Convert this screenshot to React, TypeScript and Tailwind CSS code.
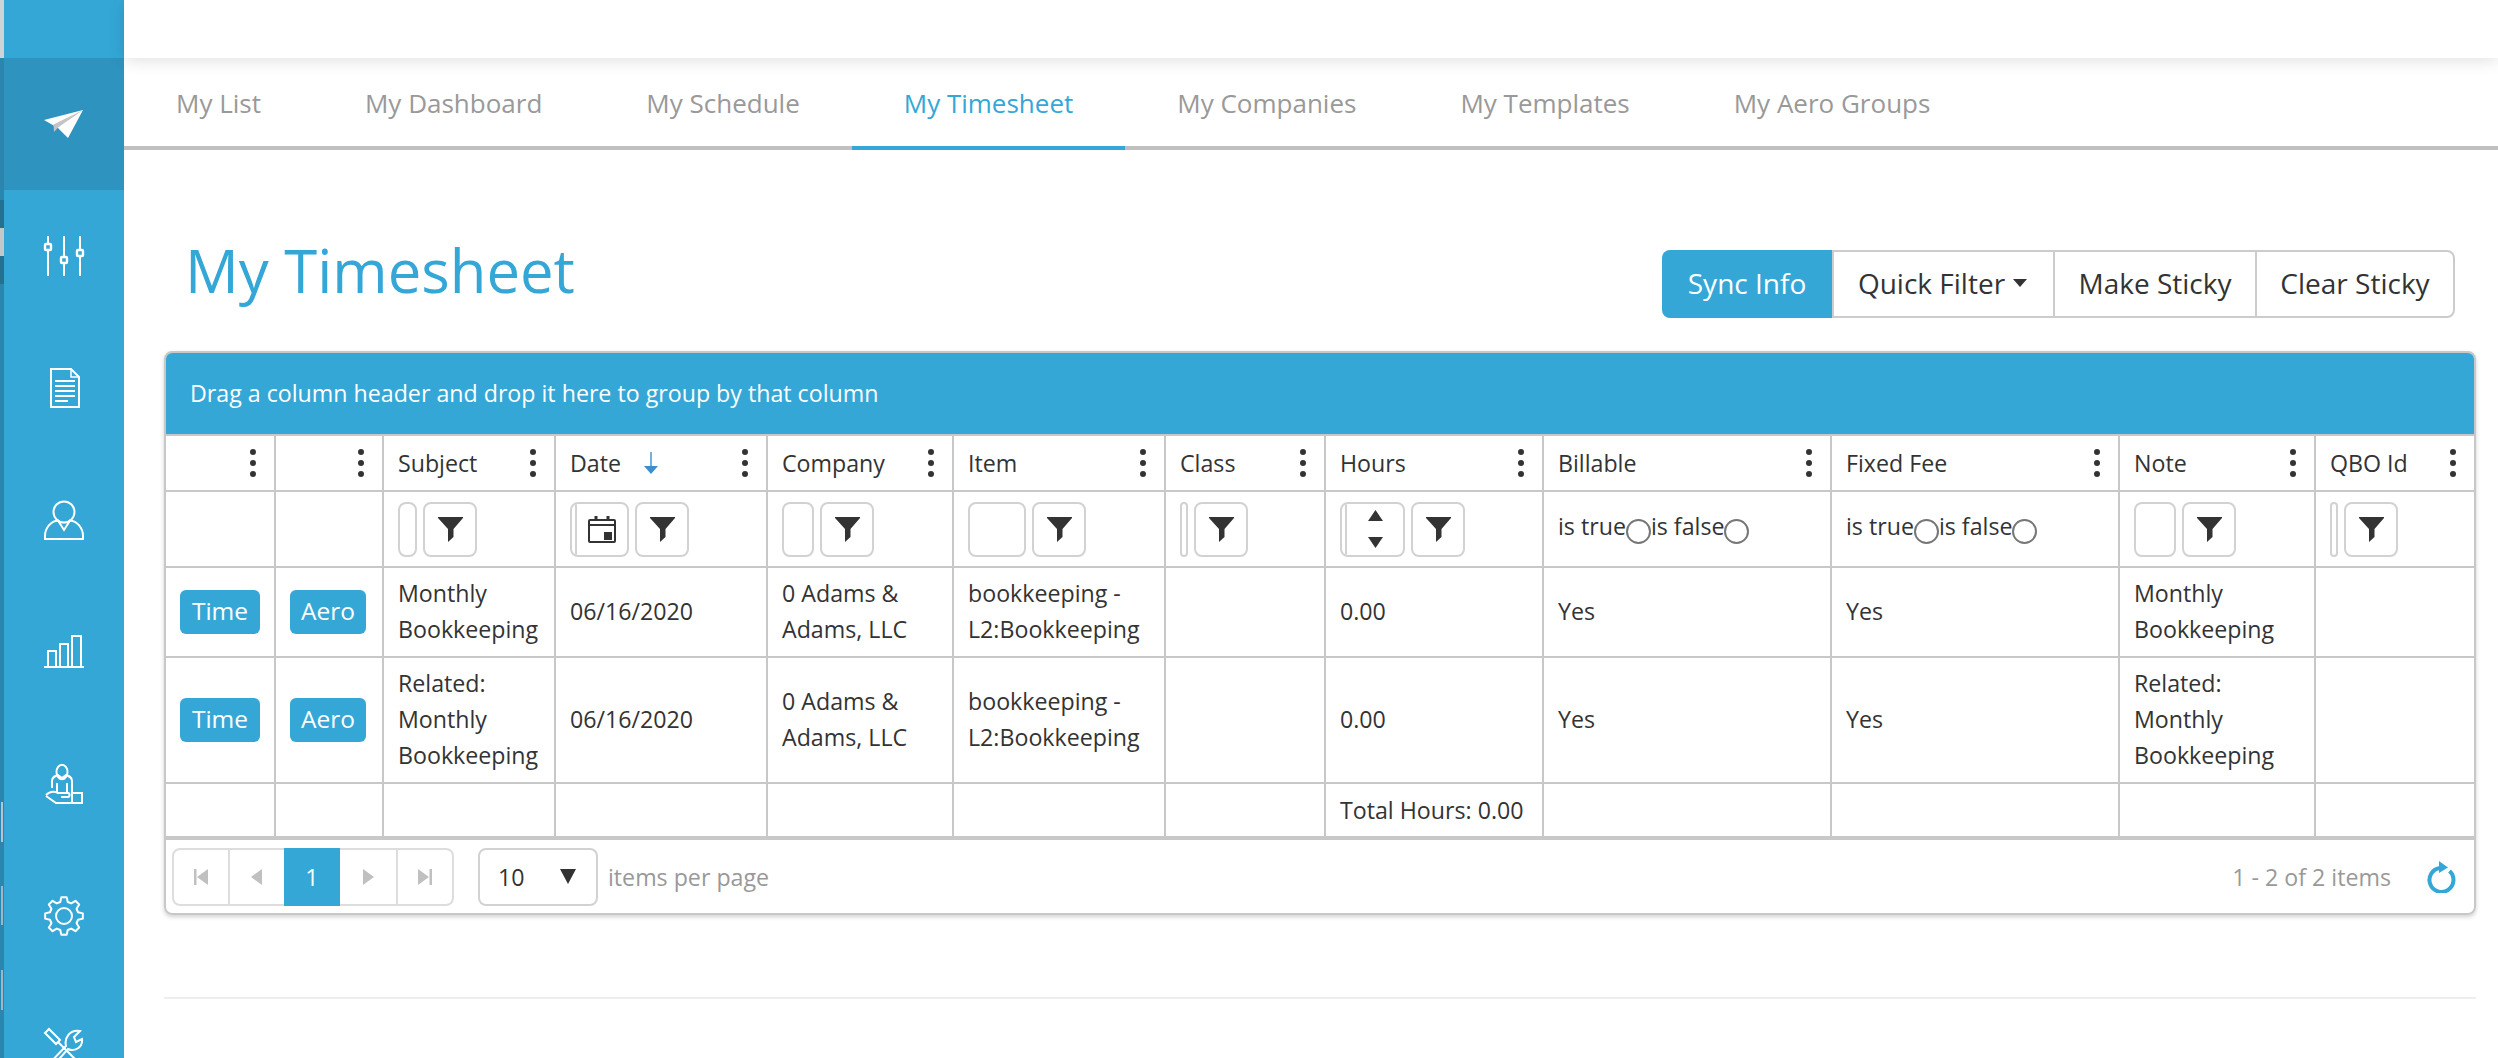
import type { ReactNode } from "react";

const strip: [string, string][] = [
  ["h-[58px]", "bg-[#cfd3d5]"],
  ["h-[142px]", "bg-[#2a86ae]"],
  ["h-[28px]", "bg-[#23708f]"],
  ["h-[28px]", "bg-[#c4c8ca]"],
  ["h-[28px]", "bg-[#23708f]"],
  ["h-[518px]", "bg-[#2a86ae]"],
  ["h-[40px] w-[2px] ml-[1px]", "bg-[#b8c4ca]"],
  ["h-[44px]", "bg-[#2a86ae]"],
  ["h-[39px] w-[2px] ml-[1px]", "bg-[#9fb6c2]"],
  ["h-[45px]", "bg-[#2a86ae]"],
  ["h-[40px] w-[2px] ml-[1px]", "bg-[#9fb6c2]"],
  ["h-[48px]", "bg-[#2a86ae]"],
];

function gearPath() {
  const pts: string[] = [];
  for (let i = 0; i < 8; i++) {
    const a = (i * Math.PI) / 4 - Math.PI / 2;
    const at = (r: number, d: number) => {
      const t = a + (d * Math.PI) / 180;
      return `${(20 + r * Math.cos(t)).toFixed(2)} ${(20 + r * Math.sin(t)).toFixed(2)}`;
    };
    pts.push(at(14.5, -15), at(19, -8), at(19, 8), at(14.5, 15));
  }
  return "M" + pts.join("L") + "Z";
}

function SideIcon({ children }: { children: ReactNode }) {
  return (
    <svg
      viewBox="0 0 40 40"
      className="w-10 h-10 overflow-visible"
      fill="none"
      stroke="#fff"
      strokeWidth="2"
    >
      {children}
    </svg>
  );
}

const sideIcons = [
  <SideIcon key="plane">
    <path d="M0 16L39 6L24 34L14 24Z" fill="#fff" stroke="none" />
    <path d="M39 6L9.5 20.5L10 28L14 23.5Z" fill="#c4c4c4" stroke="none" />
  </SideIcon>,
  <SideIcon key="sliders">
    <path d="M4 0V40M20 0V40M36 0V40" />
    <rect x="1" y="8" width="6" height="6" rx="1" fill="#34a7d7" strokeWidth="2.4" />
    <rect x="17" y="21" width="6" height="6" rx="1" fill="#34a7d7" strokeWidth="2.4" />
    <rect x="33" y="14" width="6" height="6" rx="1" fill="#34a7d7" strokeWidth="2.4" />
  </SideIcon>,
  <SideIcon key="doc">
    <path d="M7 1H27L35 9V39H7Z" />
    <path d="M27 1V9H35" strokeWidth="1.5" />
    <path d="M11 13H31M11 18H31M11 23H31M11 28H31M11 33H24" />
  </SideIcon>,
  <SideIcon key="user">
    <circle cx="20" cy="12" r="10.5" />
    <path d="M1 39V36C1 28 7 21 14 20.5L20 30L26 20.5C33 21 39 28 39 36V39Z" />
  </SideIcon>,
  <SideIcon key="chart">
    <path d="M4 35V19H12V35M16 35V12H24V35M28 35V4H37V35" />
    <path d="M0 35H40" />
  </SideIcon>,
  <SideIcon key="person">
    <ellipse cx="18" cy="8" rx="5.5" ry="7.2" />
    <path d="M8 24V17C8 13 11 12 14 11L18 14L22 11C25 12 28 13 28 17V29M13 19V28M23 19V28" />
    <path d="M2 31C6 27 10 27 14 29H24C26 29 26 33 24 33H17M2 32L12 39H38V29H28V39" />
  </SideIcon>,
  <SideIcon key="gear">
    <path d={gearPath()} strokeLinejoin="round" />
    <circle cx="20" cy="20" r="8" />
  </SideIcon>,
  <SideIcon key="tools">
    <path d="M1 5L5 1L16 12L12 16Z" />
    <path d="M14 14L38 38" />
    <path d="M3 38L22 18C20 10 26 1 36 3L30 9L32 14L38 11C39 20 30 24 24 21L7 40" />
  </SideIcon>,
];

function Dots() {
  return (
    <svg viewBox="0 0 6 28" className="w-[6px] h-7 shrink-0" fill="#333">
      <circle cx="3" cy="3" r="3" />
      <circle cx="3" cy="14" r="3" />
      <circle cx="3" cy="25" r="3" />
    </svg>
  );
}

function Funnel() {
  return (
    <svg viewBox="0 0 25 25" className="w-[25px] h-[25px]" fill="#333">
      <path d="M0 0H25V1L15.5 12V20L10 25V12L0 1Z" />
    </svg>
  );
}

function Calendar() {
  return (
    <svg viewBox="0 0 28 28" className="w-7 h-7" fill="none" stroke="#333" strokeWidth="2">
      <path d="M2 5H26Q27 5 27 6V26Q27 27 26 27H2Q1 27 1 26V6Q1 5 2 5Z" />
      <path d="M1 10H27" />
      <path d="M8 1V6M20 1V6" strokeWidth="3" />
      <rect x="16" y="17" width="8" height="8" fill="#333" stroke="none" />
    </svg>
  );
}

function Spinner() {
  return (
    <div className="flex flex-col items-center gap-[16px]">
      <svg viewBox="0 0 15 11" className="w-[15px] h-[11px]" fill="#333">
        <path d="M7.5 0L15 11H0Z" />
      </svg>
      <svg viewBox="0 0 15 11" className="w-[15px] h-[11px]" fill="#333">
        <path d="M0 0H15L7.5 11Z" />
      </svg>
    </div>
  );
}

function FilterCell({ input, inner }: { input: string; inner?: ReactNode }) {
  return (
    <div className="flex items-center gap-[6px]">
      <div className={`${input} h-[55px] rounded-lg border-2 border-[#d2d2d2] bg-white flex overflow-hidden`}>
        {inner && (
          <div className="ml-[3px] flex-1 border-l-2 border-[#d2d2d2] flex items-center justify-center">
            {inner}
          </div>
        )}
      </div>
      <button className="w-[54px] h-[55px] rounded-lg border-2 border-[#d2d2d2] bg-white flex items-center justify-center">
        <Funnel />
      </button>
    </div>
  );
}

function Radio() {
  return (
    <span className="inline-block w-[25px] h-[25px] rounded-full border-2 border-[#777] bg-white align-[-9px]" />
  );
}

function BoolFilter() {
  return (
    <div className="-mt-[6px]">
      is true
      <Radio />
      is false
      <Radio />
    </div>
  );
}

type Col = {
  title: string;
  width: string;
  filter?: ReactNode;
  sorted?: boolean;
};

const cols: Col[] = [
  { title: "", width: "w-[110px]" },
  { title: "", width: "w-[108px]" },
  { title: "Subject", width: "w-[172px]", filter: <FilterCell input="w-[19px]" /> },
  { title: "Date", width: "w-[212px]", sorted: true, filter: <FilterCell input="w-[59px]" inner={<Calendar />} /> },
  { title: "Company", width: "w-[186px]", filter: <FilterCell input="w-[32px]" /> },
  { title: "Item", width: "w-[212px]", filter: <FilterCell input="w-[58px]" /> },
  { title: "Class", width: "w-[160px]", filter: <FilterCell input="w-[8px]" /> },
  { title: "Hours", width: "w-[218px]", filter: <FilterCell input="w-[65px]" inner={<Spinner />} /> },
  { title: "Billable", width: "w-[288px]", filter: <BoolFilter /> },
  { title: "Fixed Fee", width: "w-[288px]", filter: <BoolFilter /> },
  { title: "Note", width: "w-[196px]", filter: <FilterCell input="w-[42px]" /> },
  { title: "QBO Id", width: "w-[158px]", filter: <FilterCell input="w-[8px]" /> },
];

const rows = [
  { h: "h-[90px]", subject: ["Monthly", "Bookkeeping"] },
  { h: "h-[126px]", subject: ["Related:", "Monthly", "Bookkeeping"] },
];

function Lines({ items }: { items: string[] }) {
  return (
    <>
      {items.map((t) => (
        <div key={t}>{t}</div>
      ))}
    </>
  );
}

const cell = "border-r-2 border-b-2 border-[#c8c8c8] last:border-r-0 pl-[14px] align-middle";
const dataCell = `${cell} pb-[2px]`;

function PageArrow({ d }: { d: string }) {
  return (
    <svg viewBox="0 0 16 18" className="w-4 h-[18px]" fill="#c0c0c0">
      <path d={d} />
    </svg>
  );
}

const tabs = ["My List", "My Dashboard", "My Schedule", "My Timesheet", "My Companies", "My Templates", "My Aero Groups"];

export default function App() {
  return (
    <div className="flex w-screen h-screen overflow-hidden bg-white font-['Open_Sans',sans-serif] text-[23.2px] leading-[36px] text-[#333]">
      {/* sidebar */}
      <div className="flex shrink-0 w-[124px]">
        <div className="w-1 flex flex-col bg-[#2a86ae]">
          {strip.map(([h, c], i) => (
            <div key={i} className={`${h} ${c}`} />
          ))}
        </div>
        <div className="flex-1 bg-[#34a7d7] pt-[58px]">
          {sideIcons.map((icon, i) => (
            <div
              key={i}
              className={`h-[132px] flex items-center justify-center ${i === 0 ? "bg-[#2f93bf]" : ""}`}
            >
              {icon}
            </div>
          ))}
        </div>
      </div>

      <div className="flex-1 min-w-0">
        <div className="relative h-[58px] bg-white shadow-[0_2px_16px_rgba(0,0,0,0.13)]" />

        {/* tabs */}
        <div className="flex h-[92px] border-b-4 border-[#c0c0c0] text-[26px] text-[#999]">
          {tabs.map((t) => (
            <a
              key={t}
              className={`px-[52px] pt-[1px] flex items-center -mb-1 border-b-4 ${
                t === "My Timesheet" ? "border-[#34a7d7] text-[#34a7d7]" : "border-transparent"
              }`}
            >
              {t}
            </a>
          ))}
        </div>

        <div className="pl-[40px] pr-[22px]">
          <div className="flex justify-between items-start h-[201px] pl-[21px] pr-[21px]">
            <h1 className="mt-[80px] text-[59.8px] leading-[80px] text-[#34a7d7]">My Timesheet</h1>
            <div className="mt-[100px] flex h-[68px] text-[28px]">
              <button className="w-[170px] pb-[2px] rounded-l-lg bg-[#34a7d7] text-white">Sync Info</button>
              <button className="w-[221px] pb-[2px] pr-[2px] border-2 border-r-0 border-[#cccccc] flex items-center justify-center gap-[8px]">
                Quick Filter
                <span className="w-0 h-0 border-x-[7.5px] border-x-transparent border-t-[8px] border-t-[#333]" />
              </button>
              <button className="w-[202px] pb-[2px] border-2 border-r-0 border-[#cccccc]">Make Sticky</button>
              <button className="w-[200px] pb-[2px] border-2 border-[#cccccc] rounded-r-lg">Clear Sticky</button>
            </div>
          </div>

          {/* grid */}
          <div className="rounded-lg border-2 border-[#c8c8c8] shadow-[0_2px_4px_rgba(0,0,0,0.18)] overflow-hidden">
            <div className="h-[81px] pb-[2px] bg-[#34a7d7] text-white flex items-center pl-[24px]">
              Drag a column header and drop it here to group by that column
            </div>
            <table className="w-full table-fixed border-separate border-spacing-0">
              <colgroup>
                {cols.map((c, i) => (
                  <col key={i} className={c.width} />
                ))}
              </colgroup>
              <thead>
                <tr className="h-[58px]">
                  {cols.map((c, i) => (
                    <th key={i} className={`${cell} border-t-2 font-normal text-left pr-[18px]`}>
                      <div className="flex items-center">
                        <span>{c.title}</span>
                        {c.sorted && (
                          <svg viewBox="0 0 14 22" className="w-[14px] h-[22px] ml-[23px]" fill="#3b8ed0">
                            <path d="M6.3 0H7.7V14H14L7 22L0 14H6.3Z" />
                          </svg>
                        )}
                        <span className="flex-1" />
                        <Dots />
                      </div>
                    </th>
                  ))}
                </tr>
                <tr className="h-[76px]">
                  {cols.map((c, i) => (
                    <th key={i} className={`${cell} font-normal text-left`}>
                      {c.filter}
                    </th>
                  ))}
                </tr>
              </thead>
              <tbody>
                {rows.map((r, i) => (
                  <tr key={i} className={r.h}>
                    <td className={cell}>
                      <span className="flex items-center justify-center w-[80px] h-[44px] pb-[2px] rounded-md bg-[#34a7d7] text-white text-[24.5px]">
                        Time
                      </span>
                    </td>
                    <td className={cell}>
                      <span className="flex items-center justify-center w-[76px] h-[44px] pb-[2px] rounded-md bg-[#34a7d7] text-white text-[24.5px]">
                        Aero
                      </span>
                    </td>
                    <td className={dataCell}>
                      <Lines items={r.subject} />
                    </td>
                    <td className={dataCell}>06/16/2020</td>
                    <td className={dataCell}>
                      <Lines items={["0 Adams &", "Adams, LLC"]} />
                    </td>
                    <td className={dataCell}>
                      <Lines items={["bookkeeping -", "L2:Bookkeeping"]} />
                    </td>
                    <td className={dataCell} />
                    <td className={dataCell}>0.00</td>
                    <td className={dataCell}>Yes</td>
                    <td className={dataCell}>Yes</td>
                    <td className={dataCell}>
                      <Lines items={r.subject} />
                    </td>
                    <td className={dataCell} />
                  </tr>
                ))}
                <tr className="h-[56px]">
                  {cols.map((c, i) => (
                    <td key={i} className={`${cell} border-b-4`}>
                      {c.title === "Hours" ? "Total Hours: 0.00" : ""}
                    </td>
                  ))}
                </tr>
              </tbody>
            </table>

            {/* pager */}
            <div className="h-[73px] flex items-center pl-[6px] pr-[18px]">
              <div className="flex h-[58px]">
                <div className="w-[58px] rounded-l-lg border-2 border-r-2 border-[#dddddd] flex items-center justify-center">
                  <PageArrow d="M1 1H3.5V17H1ZM15 1V17L4 9Z" />
                </div>
                <div className="w-[54px] border-y-2 border-[#dddddd] flex items-center justify-center">
                  <PageArrow d="M13 1V17L2 9Z" />
                </div>
                <div className="w-[56px] bg-[#34a7d7] text-white flex items-center justify-center">1</div>
                <div className="w-[58px] border-y-2 border-r-2 border-[#dddddd] flex items-center justify-center">
                  <PageArrow d="M3 1V17L14 9Z" />
                </div>
                <div className="w-[56px] rounded-r-lg border-y-2 border-r-2 border-[#dddddd] flex items-center justify-center">
                  <PageArrow d="M1 1V17L12 9ZM12.5 1H15V17H12.5Z" />
                </div>
              </div>
              <div className="ml-[24px] w-[120px] h-[58px] rounded-lg border-2 border-[#d2d2d2] flex items-center justify-between pl-[18px] pr-[20px]">
                <span>10</span>
                <span className="w-0 h-0 border-x-[8.5px] border-x-transparent border-t-[15px] border-t-[#333]" />
              </div>
              <span className="ml-[10px] text-[#999]">items per page</span>
              <span className="ml-auto text-[#999]">1 - 2 of 2 items</span>
              <svg viewBox="0 0 30 32" className="ml-[35px] w-[30px] h-[32px]" fill="none" stroke="#34a7d7" strokeWidth="4">
                <path d="M23.5 10A12 12 0 1 1 14 7" />
                <path d="M13 0L22 6.5L13 12Z" fill="#34a7d7" stroke="none" />
              </svg>
            </div>
          </div>

          <div className="mt-[82px] h-[2px] bg-[#eeeeee]" />
        </div>
      </div>
    </div>
  );
}
